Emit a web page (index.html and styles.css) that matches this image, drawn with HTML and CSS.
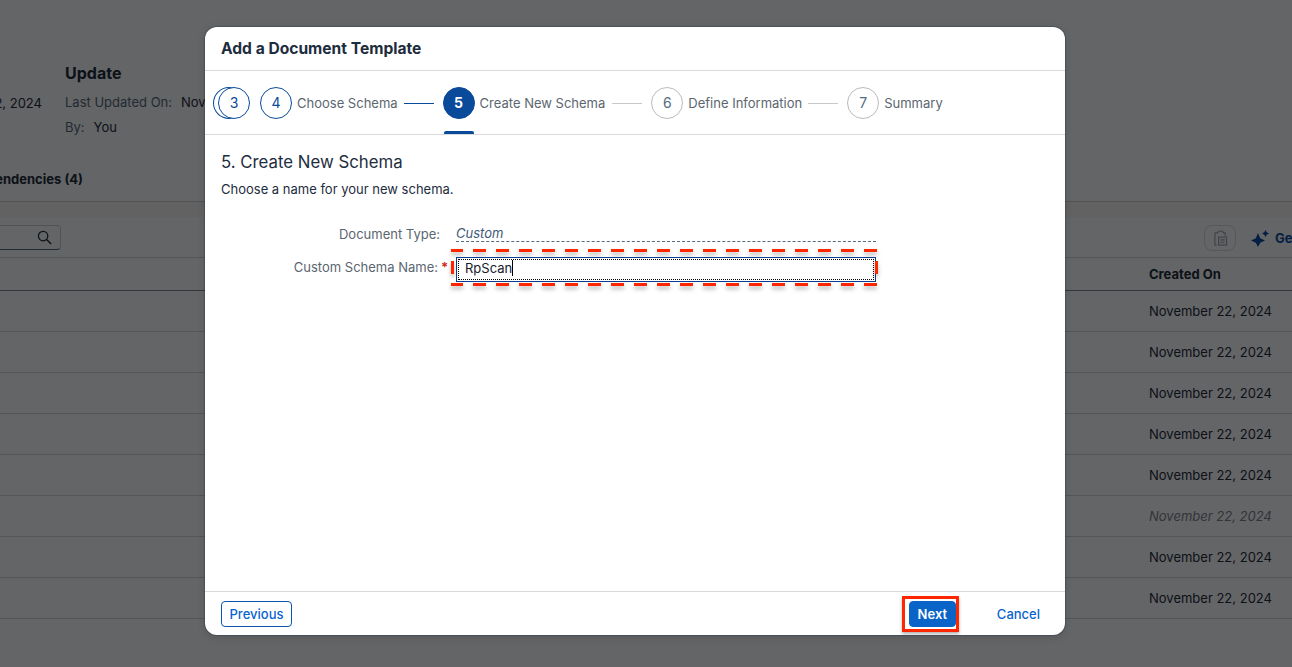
FILE: index.html
```html
<!DOCTYPE html>
<html lang="en">
<head>
<meta charset="utf-8">
<title>Add a Document Template</title>
<link rel="stylesheet" href="styles.css">
</head>
<body>
<div class="page">
  <div class="summary">
    <div class="summary-date"><span>November 22, 2024</span></div>
    <div class="summary-update">
      <h2 class="update-title">Update</h2>
      <div class="meta"><span class="meta-label">Last Updated On:</span><span class="meta-value">November 22, 2024</span></div>
      <div class="meta"><span class="meta-label">By:</span><span class="meta-value">You</span></div>
    </div>
  </div>
  <div class="tab-title"><span>Dependencies (4)</span></div>
  <div class="band"></div>
  <div class="toolbar">
    <div class="search">
      <svg class="search-icon" viewBox="0 0 16 16" width="15" height="15"><circle cx="6.5" cy="6.5" r="5" fill="none" stroke="#1d2d3e" stroke-width="1.3"/><path d="M10.2 10.2 L15 15" stroke="#1d2d3e" stroke-width="1.5" fill="none"/></svg>
    </div>
    <div class="tools">
      <div class="tool-btn">
        <svg viewBox="0 0 16 18" width="15" height="17"><path d="M5 3 H3 a1 1 0 0 0 -1 1 V15 a1 1 0 0 0 1 1 H4 M5 3 a3 2 0 0 1 6 0 H13 V6" fill="none" stroke="#9aa6b2" stroke-width="1.2"/><rect x="6" y="7.5" width="8.5" height="8.5" fill="none" stroke="#9aa6b2" stroke-width="1.2"/><path d="M8 10.5 H12.5 M8 13 H12.5" stroke="#9aa6b2" stroke-width="1.2"/></svg>
      </div>
      <svg class="sparkle" viewBox="0 0 18 18" width="18" height="18"><path d="M7 4 L9.2 9.3 L14 11.5 L9.2 13.7 L7 18 L4.8 13.7 L0 11.5 L4.8 9.3 Z" fill="#0a4fa8"/><path d="M14.5 1 L15.7 3.3 L18 4.5 L15.7 5.7 L14.5 8 L13.3 5.7 L11 4.5 L13.3 3.3 Z" fill="#0a4fa8"/></svg>
      <span class="generate">Generate</span>
    </div>
  </div>
  <div class="table">
    <div class="thead"><span class="cell-date head-text">Created On</span></div>
    <div class="row"><span class="cell-date">November 22, 2024</span></div>
    <div class="row"><span class="cell-date">November 22, 2024</span></div>
    <div class="row"><span class="cell-date">November 22, 2024</span></div>
    <div class="row"><span class="cell-date">November 22, 2024</span></div>
    <div class="row"><span class="cell-date">November 22, 2024</span></div>
    <div class="row"><span class="cell-date muted">November 22, 2024</span></div>
    <div class="row"><span class="cell-date">November 22, 2024</span></div>
    <div class="row"><span class="cell-date">November 22, 2024</span></div>
  </div>
</div>

<div class="scrim"></div>

<div class="dialog">
  <header class="dialog-head"><h1 class="dialog-title">Add a Document Template</h1></header>
  <nav class="wizard">
    <div class="step step-first">
      <span class="circle done stacked">3</span>
    </div>
    <div class="step">
      <span class="circle done">4</span><span class="step-label">Choose Schema</span>
    </div>
    <span class="link link-done"></span>
    <div class="step step-current">
      <span class="circle current">5</span><span class="step-label">Create New Schema</span>
    </div>
    <span class="link"></span>
    <div class="step">
      <span class="circle">6</span><span class="step-label">Define Information</span>
    </div>
    <span class="link link-last"></span>
    <div class="step">
      <span class="circle">7</span><span class="step-label">Summary</span>
    </div>
  </nav>
  <main class="dialog-body">
    <h2 class="section-title">5. Create New Schema</h2>
    <p class="section-text">Choose a name for your new schema.</p>
    <div class="form">
      <label class="form-label form-label-type">Document Type:</label>
      <div class="form-readonly">Custom</div>
      <label class="form-label form-label-req">Custom Schema Name:<span class="req">*</span></label>
      <div class="form-input"><span class="input-inner">RpScan<span class="caret"></span></span></div>
      <div class="dash-mark"><span class="dash-side dash-left"></span><span class="dash-side dash-right"></span></div>
    </div>
  </main>
  <footer class="dialog-foot">
    <button class="btn btn-ghost">Previous</button>
    <div class="foot-right">
      <div class="next-wrap"><button class="btn btn-primary">Next</button><span class="next-mark"></span></div>
      <button class="btn btn-link">Cancel</button>
    </div>
  </footer>
</div>
</body>
</html>
```

FILE: styles.css
```css
* { box-sizing: border-box; }
html, body { margin: 0; padding: 0; height: 667px; overflow: hidden; }
body { font-family: Inter, "Liberation Sans", sans-serif; font-size: 13px; color: #1d2d3e; background: #fbfcff; position: relative; }
h1, h2, p { margin: 0; }

.page { width: 1292px; height: 667px; overflow: hidden; display: flex; flex-direction: column; }
.summary { display: flex; height: 141px; padding-top: 62px; }
.summary-date { width: 42px; display: flex; justify-content: flex-end; white-space: nowrap; padding-top: 33px; line-height: 17px; }
.summary-update { margin-left: 23px; }
.update-title { font-size: 16px; font-weight: 700; line-height: 22px; }
.meta { display: flex; gap: 9px; line-height: 17px; margin-top: 8px; white-space: nowrap; }
.meta:first-of-type { margin-top: 10px; }
.meta-label { color: #556b82; }
.tab-title { width: 83px; display: flex; justify-content: flex-end; white-space: nowrap; font-weight: 700; height: 61px; padding-top: 30px; line-height: 17px; }
.band { height: 16px; background: #f4f5f6; border-top: 1px solid #c8cdd2; margin-top: -1px; }
.toolbar { height: 41px; display: flex; justify-content: space-between; align-items: flex-start; padding-top: 8px; border-bottom: 1px solid #d0d4d8; }
.search { width: 61px; height: 25px; border: 1px solid #c8d0d8; border-left: 0; border-bottom: 1px solid #556b82; border-radius: 0 4px 4px 0; display: flex; justify-content: flex-end; align-items: center; padding-right: 8px; }
.tools { display: flex; align-items: center; white-space: nowrap; width: 88px; }
.tool-btn { width: 32px; height: 26px; flex: none; border: 1px solid #d5dade; border-radius: 8px; display: flex; align-items: center; justify-content: center; margin-right: 15px; }
.sparkle { flex: none; margin-right: 6px; }
.generate { color: #0a4fa8; font-weight: 700; }
.table { display: flex; flex-direction: column; }
.thead { height: 33px; border-bottom: 1px solid #7b8a99; display: flex; align-items: center; padding-left: 1149px; }
.head-text { font-weight: 700; }
.row { height: 41px; border-bottom: 1px solid #d0d4d8; display: flex; align-items: center; padding-left: 1149px; }
.cell-date { white-space: nowrap; line-height: 17px; color: #1d2d3e; }
.muted { font-style: italic; color: #7a8590; }

.scrim { position: absolute; inset: 0; background: rgba(0, 0, 0, 0.6); }

.dialog { position: absolute; left: 205px; top: 27px; width: 860px; height: 608px; background: #fff; border-radius: 12px; box-shadow: 0 0 0 1px rgba(40, 55, 75, .35), 0 2px 8px rgba(0, 0, 0, .15); display: flex; flex-direction: column; overflow: hidden; }
.dialog-head { height: 44px; border-bottom: 1px solid #d9d9d9; padding-left: 16px; display: flex; align-items: center; flex: none; }
.dialog-title { font-size: 15.6px; font-weight: 700; color: #1d2d3e; white-space: nowrap; }
.wizard { height: 64px; flex: none; border-bottom: 1px solid #d9d9d9; display: flex; align-items: center; padding-left: 8px; }
.step { display: flex; align-items: center; height: 100%; position: relative; }
.step-first { margin-right: 10px; }
.circle { width: 32px; height: 32px; border-radius: 50%; border: 1px solid #bbb; display: flex; align-items: center; justify-content: center; font-size: 14px; color: #556b82; background: #fff; flex: none; position: relative; }
.done { border-color: #0a4a9a; color: #0a4a9a; }
.stacked { margin-left: 5px; box-shadow: -5px 0 0 -1px #fff, -5px 0 0 0 #0a4a9a; }
.current { background: #0a4a9a; border-color: #0a4a9a; color: #fff; font-weight: 700; }
.step-label { margin-left: 5px; color: #5b6670; font-size: 13px; white-space: nowrap; }
.link { width: 30px; height: 1px; background: #c9c9c9; margin: 2px 9px 0 7px; flex: none; }
.link-done { background: #0a4a9a; margin-left: 6px; }
.link-last { margin-left: 6px; }
.step-current::after { content: ""; position: absolute; left: 1px; bottom: 0; width: 30px; height: 3px; background: #0a4a9a; border-radius: 2px 2px 0 0; }

.dialog-body { flex: 1; padding: 15px 16px 0; }
.section-title { font-size: 16.8px; font-weight: 400; line-height: 24px; color: #1d2d3e; }
.section-text { font-size: 13px; line-height: 18px; margin-top: 6px; color: #1d2d3e; }
.form { position: relative; display: grid; grid-template-columns: 219px 420px; column-gap: 16px; row-gap: 14px; margin-top: 27px; }
.form-label { text-align: right; line-height: 17px; color: #5b6670; font-size: 13px; white-space: nowrap; align-self: center; }
.form-label-type { position: relative; top: 1px; }
.form-label-req { position: relative; top: -2px; left: -2px; }
.req { position: absolute; left: 222px; top: 0; color: #d8261d; font-weight: 700; }
.form-readonly { font-style: italic; color: #3f5a78; font-size: 13px; line-height: 17px; border-bottom: 1px dashed #556b82; height: 17px; }
.form-input { height: 25px; margin-top: 1px; border: 1px solid #0a3d91; padding: 1px; background: #fff; }
.input-inner { display: flex; align-items: center; height: 100%; border: 1px dotted #000; padding: 0 0 3px 6px; color: #16202c; font-size: 13px; }
.caret { width: 1px; height: 16px; background: #000; }
.dash-mark { position: absolute; left: 230px; top: 24px; width: 426px; height: 37px; background-image: repeating-linear-gradient(to left, #ff2600 0 13px, transparent 13px 23px), repeating-linear-gradient(to left, #ff2600 0 13px, transparent 13px 23px); background-size: 100% 3px, 100% 3px; background-position: 0 0, 0 100%; background-repeat: no-repeat; filter: drop-shadow(0 3px 2px rgba(0, 0, 0, .3)); pointer-events: none; }
.dash-side { position: absolute; top: 12px; width: 3px; height: 13px; background: #ff2600; }
.dash-left { left: 0; }
.dash-right { right: -1px; }

.dialog-foot { height: 44px; flex: none; border-top: 1px solid #d9d9d9; display: flex; align-items: center; justify-content: space-between; padding: 0 16px; }
.foot-right { display: flex; align-items: center; gap: 41px; padding-right: 9px; }
.next-wrap { position: relative; display: flex; }
.next-mark { position: absolute; left: -7px; right: -3px; top: -5px; bottom: -5px; border: 3px solid #ff2600; box-shadow: 0 2px 3px rgba(0, 0, 0, .3); pointer-events: none; }
.btn { font: inherit; font-size: 13px; height: 26px; border-radius: 4px; padding: 0; cursor: pointer; line-height: 24px; }
.btn-ghost { width: 71px; background: #fff; border: 1px solid #0a55ad; color: #0a64d0; font-weight: 500; }
.btn-primary { width: 47px; background: #0a64c8; border: 1px solid #0a64c8; color: #fff; font-weight: 600; }
.btn-link { background: none; border: 0; color: #0a64d0; font-weight: 500; }
```
